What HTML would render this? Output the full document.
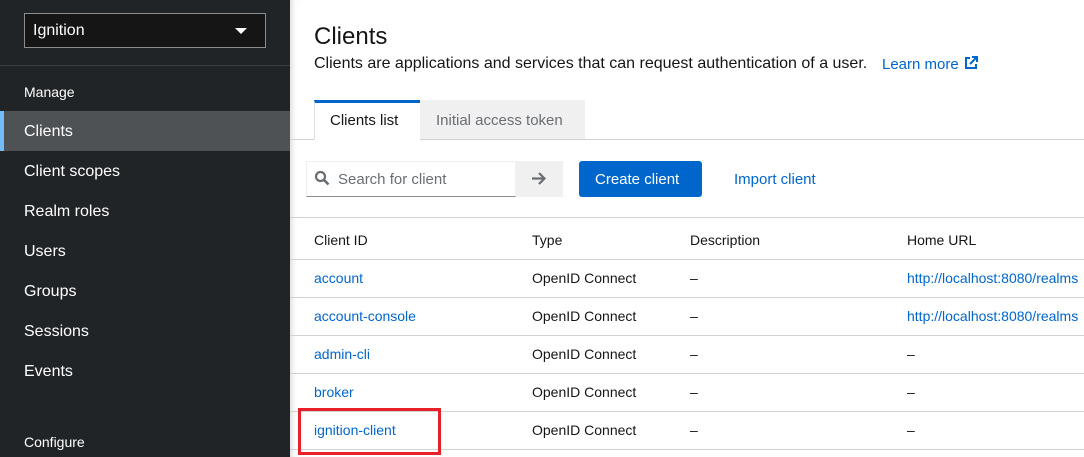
<!DOCTYPE html>
<html><head><style>
*{margin:0;padding:0;box-sizing:border-box}
body{width:1084px;height:457px;overflow:hidden;font-family:"Liberation Sans",sans-serif;background:#fff;position:relative;color:#151515}
.sb{position:absolute;left:0;top:0;width:290px;height:457px;background:#212427;color:#fff}
.dd{position:absolute;left:24px;top:13px;width:242px;height:35px;background:#151515;border:1px solid #8a8d90;font-size:16px;padding:8px 8px}
.dd:after{content:"";position:absolute;right:18px;top:14px;border-left:6px solid transparent;border-right:6px solid transparent;border-top:6px solid #fff}
.sep{position:absolute;left:0;top:65px;width:290px;height:1px;background:#3c3f42}
.sec{position:absolute;left:24px;font-size:14px}
.it{position:absolute;left:0;width:290px;height:40px;font-size:16px;padding:12px 24px 0}
.act{background:#4f5255;border-left:4px solid #73bcf7;padding-left:20px}
.main{position:absolute;left:290px;top:0;right:0;height:457px;box-shadow:inset 6px 0 6px -4px rgba(0,0,0,.15)}
a{color:#0066cc;text-decoration:none}
.t{position:absolute;white-space:nowrap}
.line{position:absolute;left:290px;right:0;height:1px;background:#d2d2d2}
</style></head><body>
<div class="sb">
<div class="dd">Ignition</div>
<div class="sep"></div>
<div class="sec" style="top:84px">Manage</div>
<div class="it act" style="top:111px">Clients</div>
<div class="it" style="top:151px">Client scopes</div>
<div class="it" style="top:191px">Realm roles</div>
<div class="it" style="top:231px">Users</div>
<div class="it" style="top:271px">Groups</div>
<div class="it" style="top:311px">Sessions</div>
<div class="it" style="top:351px">Events</div>
<div class="sec" style="top:434px">Configure</div>
</div>
<div class="main"></div>
<div class="t" style="left:314px;top:23px;font-size:24px">Clients</div>
<div class="t" style="left:314px;top:55px;font-size:16px">Clients are applications and services that can request authentication of a user.</div>
<div class="t" style="left:882px;top:55px;font-size:15px;color:#0066cc">Learn more <svg width="16" height="16" viewBox="0 0 16 16" style="vertical-align:-2px"><path d="M7 3H3v10h10V9M9 2h5v5M14 2L7 9" fill="none" stroke="#0066cc" stroke-width="2"/></svg></div>
<div class="line" style="top:139px"></div>
<div style="position:absolute;left:314px;top:100px;width:106px;height:40px;background:#fff;border-top:3px solid #0066cc;border-left:1px solid #e0e0e0;font-size:15px;padding:9px 0 0 15px">Clients list</div>
<div style="position:absolute;left:420px;top:100px;width:165px;height:39px;background:#f0f0f0;font-size:15px;color:#6a6e73;padding:12px 0 0 16px">Initial access token</div>
<div style="position:absolute;left:306px;top:161px;width:210px;height:36px;border:1px solid #f0f0f0;border-bottom:1px solid #8a8d90"></div>
<svg style="position:absolute;left:314px;top:170px" width="16" height="16" viewBox="0 0 16 16"><circle cx="6.5" cy="6.5" r="4.5" fill="none" stroke="#6a6e73" stroke-width="2.2"/><path d="M10 10l4.5 4.5" stroke="#6a6e73" stroke-width="2.6"/></svg>
<div class="t" style="left:338px;top:171px;font-size:15px;color:#6a6e73">Search for client</div>
<div style="position:absolute;left:516px;top:161px;width:47px;height:36px;background:#f0f0f0"></div>
<svg style="position:absolute;left:531px;top:171px" width="16" height="15" viewBox="0 0 16 15"><path d="M1 7.5h12M8 2l5.5 5.5L8 13" fill="none" stroke="#6a6e73" stroke-width="2.2"/></svg>
<div style="position:absolute;left:579px;top:161px;width:123px;height:36px;background:#0066cc;border-radius:3px;color:#fff;font-size:15px;padding:10px 0 0 16px">Create client</div>
<div class="t" style="left:734px;top:171px;font-size:15px;color:#0066cc">Import client</div>
<div class="line" style="top:217px"></div>
<div class="t" style="left:314px;top:232px;font-size:14px">Client ID</div>
<div class="t" style="left:532px;top:232px;font-size:14px">Type</div>
<div class="t" style="left:690px;top:232px;font-size:14px">Description</div>
<div class="t" style="left:907px;top:232px;font-size:14px">Home URL</div>
<div class="line" style="top:259px"></div>
<div class="line" style="top:297px"></div>
<div class="line" style="top:335px"></div>
<div class="line" style="top:373px"></div>
<div class="line" style="top:411px"></div>
<div class="line" style="top:449px"></div>
<div style="position:absolute;left:0;top:270px;font-size:14px;width:1084px">
<div class="t" style="left:314px;top:0"><a>account</a></div><div class="t" style="left:532px;top:0">OpenID Connect</div><div class="t" style="left:690px;top:0">–</div><div class="t" style="left:907px;top:0"><a>http://localhost:8080/realms</a></div>
<div class="t" style="left:314px;top:38px"><a>account-console</a></div><div class="t" style="left:532px;top:38px">OpenID Connect</div><div class="t" style="left:690px;top:38px">–</div><div class="t" style="left:907px;top:38px"><a>http://localhost:8080/realms</a></div>
<div class="t" style="left:314px;top:76px"><a>admin-cli</a></div><div class="t" style="left:532px;top:76px">OpenID Connect</div><div class="t" style="left:690px;top:76px">–</div><div class="t" style="left:907px;top:76px">–</div>
<div class="t" style="left:314px;top:114px"><a>broker</a></div><div class="t" style="left:532px;top:114px">OpenID Connect</div><div class="t" style="left:690px;top:114px">–</div><div class="t" style="left:907px;top:114px">–</div>
<div class="t" style="left:314px;top:152px"><a>ignition-client</a></div><div class="t" style="left:532px;top:152px">OpenID Connect</div><div class="t" style="left:690px;top:152px">–</div><div class="t" style="left:907px;top:152px">–</div>
</div>
<div style="position:absolute;left:298px;top:408px;width:143px;height:47px;border:3px solid #e8202a"></div>
</body></html>
